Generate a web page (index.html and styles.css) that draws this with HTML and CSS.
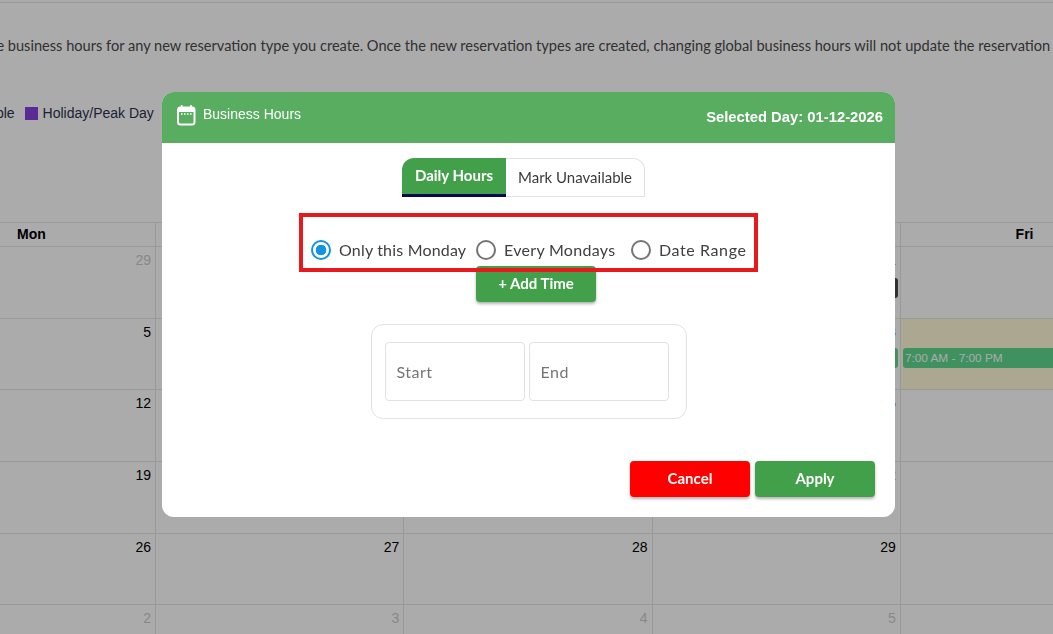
FILE: index.html
```html
<!DOCTYPE html>
<html lang="en">
<head>
<meta charset="utf-8">
<title>Business Hours</title>
<link rel="stylesheet" href="styles.css">
</head>
<body>
<div class="page">
  <p class="notice">the business hours for any new reservation type you create. Once the new reservation types are created, changing global business hours will not update the reservation types.</p>
  <div class="legend">
    <span class="legend-cut">Available</span>
    <span class="swatch"></span>
    <span>Holiday/Peak Day</span>
  </div>
  <div class="calendar">
    <div class="head">Mon</div><div class="head">Tue</div><div class="head">Wed</div><div class="head">Thu</div><div class="head">Fri</div>

    <div class="day muted"><div class="num">29</div></div>
    <div class="day muted"><div class="num">30</div></div>
    <div class="day muted"><div class="num">31</div></div>
    <div class="day"><div class="num">1</div><div class="chip"></div></div>
    <div class="day"><div class="num">2</div></div>

    <div class="day"><div class="num">5</div></div>
    <div class="day"><div class="num">6</div></div>
    <div class="day"><div class="num">7</div></div>
    <div class="day"><div class="num">8</div><div class="event left"></div></div>
    <div class="day today"><div class="num">9</div><div class="event right">7:00 AM - 7:00 PM</div></div>

    <div class="day"><div class="num">12</div></div>
    <div class="day"><div class="num">13</div></div>
    <div class="day"><div class="num">14</div></div>
    <div class="day"><div class="num">15</div></div>
    <div class="day"><div class="num">16</div></div>

    <div class="day"><div class="num">19</div></div>
    <div class="day"><div class="num">20</div></div>
    <div class="day"><div class="num">21</div></div>
    <div class="day"><div class="num">22</div></div>
    <div class="day"><div class="num">23</div></div>

    <div class="day"><div class="num">26</div></div>
    <div class="day"><div class="num">27</div></div>
    <div class="day"><div class="num">28</div></div>
    <div class="day"><div class="num">29</div></div>
    <div class="day"><div class="num">30</div></div>

    <div class="day muted"><div class="num">2</div></div>
    <div class="day muted"><div class="num">3</div></div>
    <div class="day muted"><div class="num">4</div></div>
    <div class="day muted"><div class="num">5</div></div>
    <div class="day muted"><div class="num">6</div></div>
  </div>
</div>

<div class="overlay"></div>

<div class="modal">
  <header class="modal-head">
    <div class="title">
      <svg class="cal-icon" width="20" height="22" viewBox="0 0 20 22" aria-hidden="true">
        <rect x="2" y="3.5" width="16.5" height="17" rx="2.5" fill="none" stroke="#fff" stroke-width="2"/>
        <rect x="2" y="3.5" width="16.5" height="4.5" fill="#fff"/>
        <rect x="4.6" y="1" width="2" height="4" rx="1" fill="#fff"/>
        <rect x="14" y="1" width="2" height="4" rx="1" fill="#fff"/>
        <path d="M5 10h1.6M8 10h1.6M11 10h1.6M14 10h1.6" stroke="#fff" stroke-width="1.4" fill="none"/>
      </svg>
      <span>Business Hours</span>
    </div>
    <div class="selected">Selected Day: 01-12-2026</div>
  </header>

  <div class="tabs">
    <div class="tab active">Daily Hours</div>
    <div class="tab">Mark Unavailable</div>
  </div>

  <div class="radios">
    <label class="radio tight"><span class="dot checked"></span>Only this Monday</label>
    <label class="radio"><span class="dot"></span>Every Mondays</label>
    <label class="radio wide"><span class="dot"></span>Date Range</label>
  </div>

  <div class="add-row"><button class="btn add">+ Add Time</button></div>

  <div class="times">
    <div class="time-input">Start</div>
    <div class="time-input">End</div>
  </div>

  <div class="actions">
    <button class="btn cancel">Cancel</button>
    <button class="btn apply">Apply</button>
  </div>

  <div class="highlight"></div>
</div>
</body>
</html>
```
FILE: styles.css
```css
* { box-sizing: border-box; }
html, body { margin: 0; height: 100%; overflow: hidden; background: #fff; }
body { font-family: "Liberation Sans", Arial, sans-serif; color: #000; }

.page { width: 1053px; height: 634px; overflow: hidden; padding-top: 2px; }

.notice {
  margin: 0 0 0 -17px;
  height: 84px;
  border-top: 1px solid #e5e5e5;
  padding-top: 33px;
  white-space: nowrap;
  font-family: Lato, sans-serif;
  font-size: 14.6px;
  line-height: 20px;
  color: #4a4a4a;
}

.legend {
  display: flex;
  align-items: center;
  height: 54px;
  margin-left: -42px;
  font-size: 14px;
  color: #2b3350;
}
.legend-cut { margin-right: 10px; }
.swatch { width: 13px; height: 13px; background: #8640e0; margin-right: 5px; }

.calendar {
  margin-top: 82px;
  margin-left: -92.3px;
  width: 1242px;
  display: grid;
  grid-template-columns: repeat(5, 248.3px);
  grid-template-rows: 24px repeat(6, 71.65px);
}
.head {
  border-top: 1px solid #e5e5e5;
  border-right: 1px solid #e5e5e5;
  text-align: center;
  font-size: 14px;
  font-weight: 700;
  line-height: 23px;
}
.day {
  border-top: 1px solid #e5e5e5;
  border-right: 1px solid #e5e5e5;
  font-size: 14px;
}
.num { height: 25px; padding: 3px 4px 0 0; line-height: 20px; text-align: right; }
.muted .num { color: #cbcbcb; }
.today { background: #fff9d8; }
.chip { margin: 6px 2px 0 0; height: 20px; border-radius: 3px; background: #4a4a4a; }
.event {
  margin-top: 4px;
  height: 20px;
  border-radius: 3px;
  background: #5ed98f;
  color: #fff;
  font-size: 11.8px;
  line-height: 20px;
  padding-left: 2px;
}
.event.left { margin-right: 2px; }
.event.right { margin-left: 2px; }

.overlay { position: fixed; inset: 0; background: rgba(0, 0, 0, .33); }

.modal {
  position: fixed;
  left: 162px;
  top: 92px;
  width: 733px;
  height: 425px;
  background: #fff;
  border-radius: 12px;
  overflow: hidden;
  font-family: Lato, sans-serif;
}
.modal-head {
  height: 51px;
  background: #58ad61;
  color: #fff;
  display: flex;
  justify-content: space-between;
  padding: 0 12px 0 14px;
}
.title { display: flex; align-items: flex-start; gap: 7px; padding-top: 12px; font-size: 14px; font-family: "Liberation Sans", sans-serif; }
.title span { line-height: 20px; }
.cal-icon { flex: none; }
.selected { font-family: "Liberation Sans", sans-serif; font-weight: 700; font-size: 14.8px; padding-top: 16px; line-height: 18px; }

.tabs { display: flex; margin: 15px 0 0 240px; height: 39px; }
.tab {
  width: 139px;
  border: 1px solid #e2e2e2;
  border-left: 0;
  border-top-right-radius: 12px;
  color: #3a3a3a;
  font-size: 15px;
  text-align: center;
  line-height: 37px;
}
.tab.active {
  width: 104px;
  border: 0;
  border-bottom: 3px solid #000a50;
  border-radius: 12px 0 0 0;
  background: #43a04a;
  color: #fff;
  font-weight: 700;
  line-height: 35px;
}

.radios {
  display: grid;
  grid-template-columns: 165px 155px auto;
  margin: 41px 0 0 149px;
  height: 24px;
}
.radio { display: flex; align-items: center; gap: 8px; font-size: 16px; letter-spacing: .3px; color: #404040; line-height: 24px; }
.radio.tight { letter-spacing: .18px; }
.radio.wide { letter-spacing: .6px; }
.dot { width: 20px; height: 20px; border-radius: 50%; border: 2px solid #757575; flex: none; background: #fff; }
.dot.checked { border-color: #1295e0; background: radial-gradient(circle, #1295e0 0 5px, #fff 5.6px); }

.add-row { margin: 4px 0 0 314px; }
.btn {
  border: 0;
  height: 36px;
  width: 120px;
  border-radius: 4px;
  color: #fff;
  font-family: Lato, sans-serif;
  font-size: 15px;
  font-weight: 700;
  padding: 0 0 2px;
  box-shadow: 0 2px 3px rgba(0, 0, 0, .3);
}
.add { display: block; background: #43a04a; }
.apply { background: #43a04a; }
.cancel { background: #f00; }

.times {
  display: flex;
  gap: 4px;
  width: 316px;
  height: 95px;
  margin: 22px auto 0;
  padding: 17px 17px 17px 13px;
  border: 1px solid #e2e2e2;
  border-radius: 12px;
}
.time-input {
  flex: 1;
  height: 59px;
  border: 1px solid #e2e2e2;
  border-radius: 4px;
  padding-left: 11px;
  line-height: 58px;
  font-size: 16px;
  letter-spacing: .5px;
  color: #757575;
}

.actions { display: flex; justify-content: flex-end; gap: 5px; margin-top: 42px; padding-right: 20px; }

.highlight {
  position: absolute;
  left: 137px;
  top: 121px;
  width: 459px;
  height: 59px;
  border: 4px solid #e8191c;
  pointer-events: none;
}
```
